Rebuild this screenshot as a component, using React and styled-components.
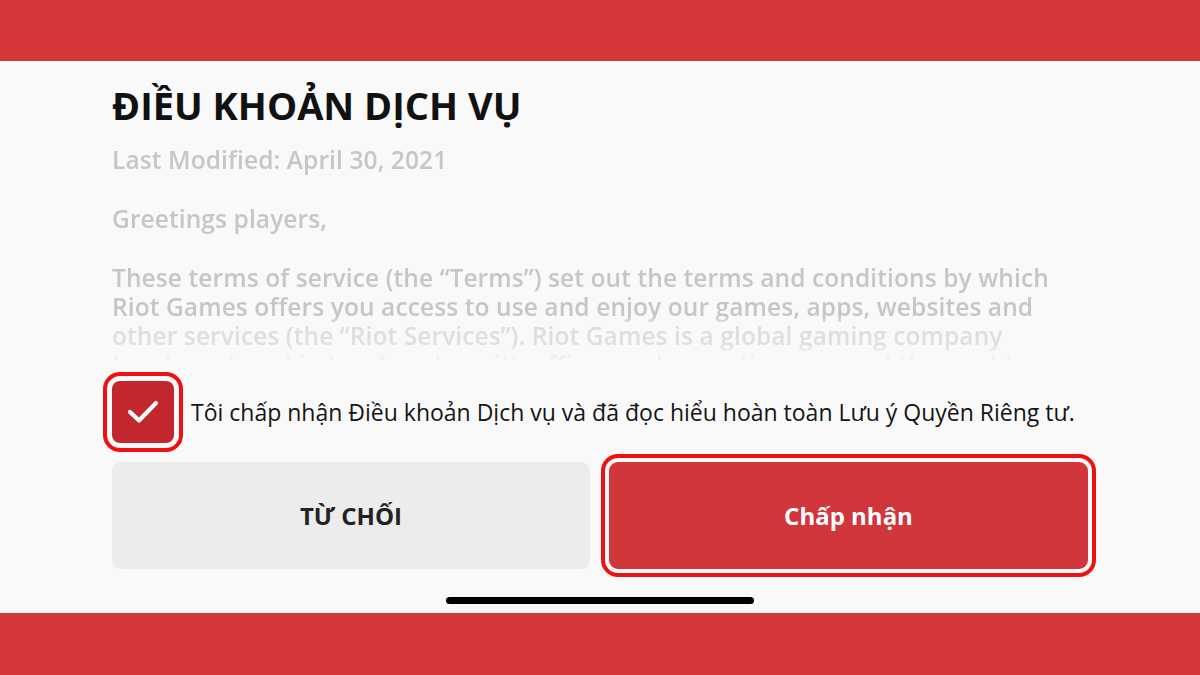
import React from "react";
import styled, { createGlobalStyle } from "styled-components";

const Global = createGlobalStyle`
  html, body { margin: 0; padding: 0; }
  body { font-family: "Open Sans", "Noto Sans", sans-serif; background: #f9f9f9; }
`;

const Page = styled.div`
  width: 1200px;
  height: 675px;
  display: flex;
  flex-direction: column;
  overflow: hidden;
  background: #f9f9f9;
`;

const Band = styled.div`
  height: ${(p) => p.$h}px;
  flex: none;
  background: #d43838;
`;

const Main = styled.div`
  flex: 1;
  display: flex;
  flex-direction: column;
  padding: 0 112px;
`;

const Title = styled.h1`
  margin: 22px 0 0;
  font-size: 38px;
  line-height: 44px;
  font-weight: 700;
  color: #111;
  letter-spacing: 0;
`;

const Terms = styled.div`
  height: 215px;
  overflow: hidden;
  margin-top: 18px;
  -webkit-mask-image: linear-gradient(to bottom, #000 0px, #000 172px, rgba(0,0,0,0.55) 177px, rgba(0,0,0,0.5) 200px, rgba(0,0,0,0.2) 206px, rgba(0,0,0,0.15) 215px);
  mask-image: linear-gradient(to bottom, #000 0px, #000 172px, rgba(0,0,0,0.55) 177px, rgba(0,0,0,0.5) 200px, rgba(0,0,0,0.2) 206px, rgba(0,0,0,0.15) 215px);
`;

const Para = styled.p`
  margin: 0 0 30px;
  font-size: 24.5px;
  line-height: 29px;
  font-weight: 600;
  color: #c6c6c6;
  white-space: nowrap;
  letter-spacing: 0.1px;
`;

const AgreeRow = styled.label`
  display: flex;
  align-items: center;
  gap: 17px;
  height: 62px;
  margin-top: 21px;
`;

const Check = styled.span`
  width: 62px;
  height: 62px;
  flex: none;
  border-radius: 8px;
  background: #c1272d;
  display: flex;
  align-items: center;
  justify-content: center;
  outline: 4px solid #ee1111;
  outline-offset: 5px;
`;

const AgreeText = styled.span`
  font-size: 23px;
  color: #151515;
  white-space: nowrap;
`;

const Buttons = styled.div`
  display: grid;
  grid-template-columns: 478px 479px;
  gap: 19px;
  margin-top: 19px;
`;

const Btn = styled.button`
  height: 107px;
  border: none;
  border-radius: 9px;
  font-family: inherit;
  font-size: 24px;
  font-weight: 700;
  background: ${(p) => (p.$primary ? "#d0363a" : "#ececec")};
  color: ${(p) => (p.$primary ? "#fff" : "#222")};
  ${(p) => p.$primary && `outline: 4px solid #ee1111; outline-offset: 4px;`}
`;

const HomeBar = styled.div`
  width: 308px;
  height: 7px;
  border-radius: 4px;
  background: #000;
  margin: 28px auto 0;
`;

export default function App() {
  return (
    <Page>
      <Global />
      <Band $h={61} />
      <Main>
        <Title>ĐIỀU KHOẢN DỊCH VỤ</Title>
        <Terms>
          <Para>Last Modified: April 30, 2021</Para>
          <Para>Greetings players,</Para>
          <Para>
            These terms of service (the “Terms”) set out the terms and conditions by which
            <br />
            Riot Games offers you access to use and enjoy our games, apps, websites and
            <br />
            other services (the “Riot Services”). Riot Games is a global gaming company
            <br />
            headquartered in Los Angeles with offices and operations around the world.
          </Para>
        </Terms>
        <AgreeRow>
          <Check>
            <svg width="32" height="26" viewBox="0 0 32 26">
              <path d="M3 13 L12 21.5 L29 4" fill="none" stroke="#fff" strokeWidth="4.2" strokeLinecap="round" strokeLinejoin="round" />
            </svg>
          </Check>
          <AgreeText>Tôi chấp nhận Điều khoản Dịch vụ và đã đọc hiểu hoàn toàn Lưu ý Quyền Riêng tư.</AgreeText>
        </AgreeRow>
        <Buttons>
          <Btn>TỪ CHỐI</Btn>
          <Btn $primary>Chấp nhận</Btn>
        </Buttons>
        <HomeBar />
      </Main>
      <Band $h={62} />
    </Page>
  );
}
